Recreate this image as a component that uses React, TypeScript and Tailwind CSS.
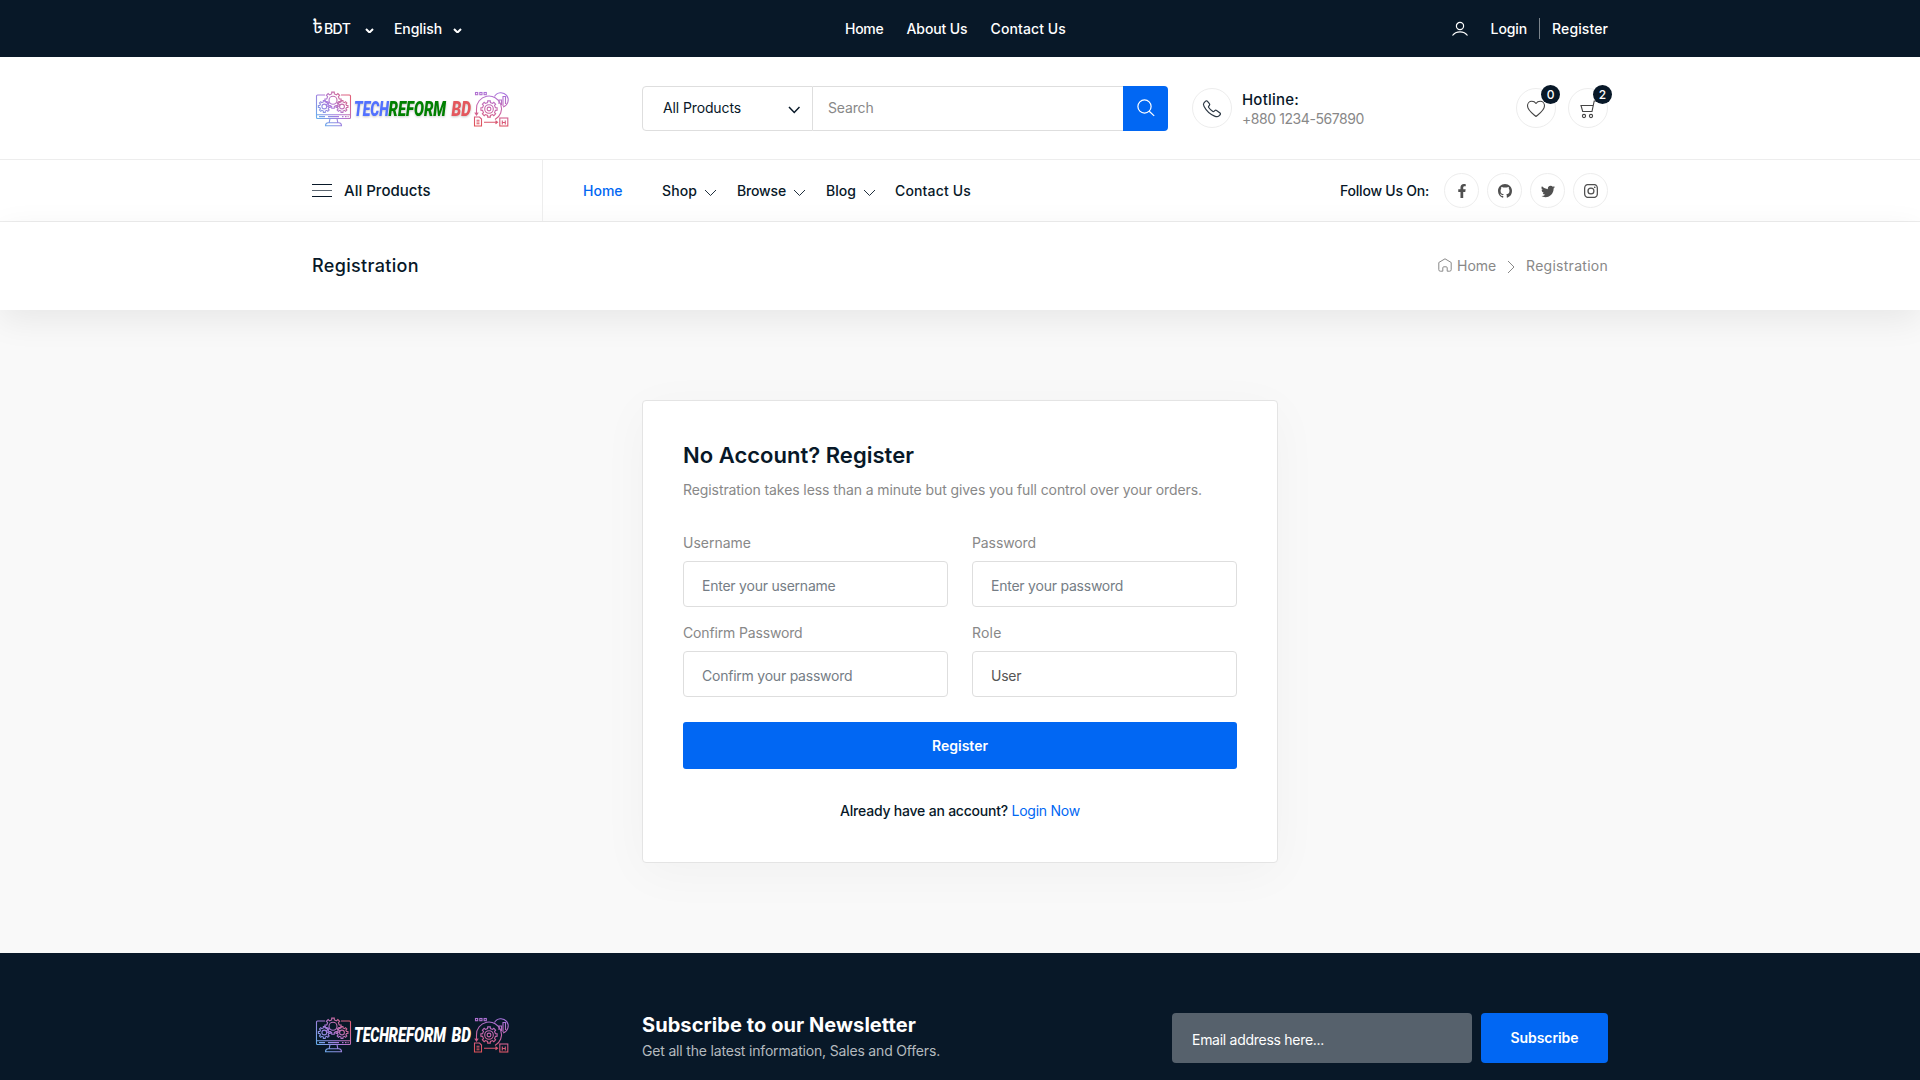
import type { ReactNode } from "react";
import { BsGithub, BsInstagram, BsTwitter } from "react-icons/bs";
import { FaFacebookF } from "react-icons/fa";

const gearPath = (cx: number, cy: number, outer: number, inner: number, teeth: number) => {
  const pts: string[] = [];
  const step = (Math.PI * 2) / teeth;
  for (let i = 0; i < teeth; i++) {
    const a = i * step - Math.PI / 2;
    const at = (r: number, o: number) =>
      `${(cx + r * Math.cos(a + o * step)).toFixed(2)},${(cy + r * Math.sin(a + o * step)).toFixed(2)}`;
    pts.push(at(inner, -0.27), at(outer, -0.2), at(outer, 0.2), at(inner, 0.27));
  }
  return `M${pts.join("L")}Z`;
};

function Logo({ id, light }: { id: string; light?: boolean }) {
  const a = `url(#${id}-a)`;
  const b = `url(#${id}-b)`;
  return (
    <svg width="200" height="46" viewBox="0 0 200 46" fill="none" className="block">
      <defs>
        <linearGradient id={`${id}-a`} gradientUnits="userSpaceOnUse" x1="6" y1="36" x2="37" y2="10">
          <stop offset="0" stopColor="#5fb4ee" />
          <stop offset="0.5" stopColor="#a97add" />
          <stop offset="1" stopColor="#e0607a" />
        </linearGradient>
        <linearGradient id={`${id}-b`} gradientUnits="userSpaceOnUse" x1="182" y1="5" x2="176" y2="39">
          <stop offset="0" stopColor="#a873dd" />
          <stop offset="0.55" stopColor="#cb66a6" />
          <stop offset="1" stopColor="#e0525a" />
        </linearGradient>
      </defs>
      <g stroke={a} strokeWidth="1.1">
        <path d="M13 8H5.5a1 1 0 0 0-1 1v21.5a1 1 0 0 0 1 1h32a1 1 0 0 0 1-1V9a1 1 0 0 0-1-1H29" />
        <path d="M4.5 27.7h34M7 29.6h6M16 29.6h11M30 29.6h1.5M33 29.6h1.5M35.6 29.6h1" />
        <path d="M18 31.5l-.8 4.2M25 31.5l.8 4.2M13.5 38.8c0-2 .8-3.1 2.6-3.1h10.8c1.800 0 2.600 1.100 2.600 3.100z" />
        <path d={gearPath(21, 13.2, 8.2, 6.4, 8)} />
        <circle cx="21" cy="13.2" r="4" />
        <path d={gearPath(12.3, 19.5, 6, 4.6, 8)} />
        <circle cx="12.3" cy="19.500" r="2.400" />
        <path d={gearPath(30, 19.5, 6, 4.6, 8)} />
        <circle cx="30" cy="19.5" r="2.4" />
      </g>
      <g
        fontFamily="Roboto, sans-serif"
        fontStyle="italic"
        fontWeight="900"
        fontSize="21"
        style={{ filter: light ? undefined : "drop-shadow(0 1px 1px rgba(0,0,0,.22))" }}
      >
        <text x="42" y="28.5" textLength="35" lengthAdjust="spacingAndGlyphs" fill={light ? "#fff" : "#5271ff"}>TECH</text>
        <text x="76.500" y="28.5" textLength="57.500" lengthAdjust="spacingAndGlyphs" fill={light ? "#fff" : "#008000"}>REFORM</text>
        <text x="139.500" y="28.5" textLength="19.500" lengthAdjust="spacingAndGlyphs" fill={light ? "#fff" : "#e4575d"}>BD</text>
      </g>
      <g stroke={b} strokeWidth="1.1">
        <rect x="163.500" y="5.500" width="2.200" height="2.200" />
        <rect x="167.800" y="5.500" width="2.200" height="2.200" />
        <rect x="172.100" y="5.500" width="2.200" height="2.200" />
        <path d="M164.500 28V22a12.500 12.500 0 1 1 18.500 10.500M162.800 25.500l1.700 2.500 1.700-2.500" />
        <path d="M182.500 9.500a7.300 7.300 0 1 1 8.500 10.500M187 17v-4h2.500v5M191 19V9.500h2.500V17" />
        <path d={gearPath(177, 22, 8.2, 6.600, 8)} />
        <circle cx="177" cy="22" r="4.300" />
        <circle cx="177" cy="22" r="1.900" />
        <path d="M162.500 30h5l2 2v7h-7zM164.500 33.200h3M164.500 35h3M164.500 36.800h3" />
        <path d="M172 35.200h13M183.500 33.700l2 1.500-2 1.500" />
        <rect x="187.800" y="31" width="8" height="8" />
        <path d="M190.300 33.500v4M193.300 33.500v4M190.300 35.500h3" />
      </g>
    </svg>
  );
}

function Chevron({ w, h, stroke, className = "" }: { w: number; h: number; stroke: number; className?: string }) {
  return (
    <svg width={w + 2} height={h + 2} viewBox={`0 0 ${w + 2} ${h + 2}`} fill="none" stroke="currentColor" strokeWidth={stroke} className={`shrink-0 ${className}`}>
      <path d={`M1 1l${w / 2} ${h}l${w / 2} ${-h}`} />
    </svg>
  );
}

function RoundIcon({ children, badge }: { children: ReactNode; badge?: string }) {
  return (
    <div className="relative flex size-10 items-center justify-center rounded-full border border-[#ededed] text-[#444]">
      {children}
      {badge && (
        <span className="absolute -top-1 -right-[5px] flex size-[19px] items-center justify-center rounded-full bg-[#081828] text-xs font-medium text-white">
          {badge}
        </span>
      )}
    </div>
  );
}

function Field({ label, placeholder, value, className = "" }: { label: string; placeholder?: string; value?: string; className?: string }) {
  return (
    <label className="block">
      <span className={`block h-5 leading-5 text-[#888] ${className}`}>{label}</span>
      <input
        readOnly
        placeholder={placeholder}
        defaultValue={value}
        className="mt-2 block h-[46px] w-full rounded border border-[#dedede] bg-white px-[18px] pt-0.5 tracking-[-0.23px] text-[#555] outline-none placeholder:text-[#757d85]"
      />
    </label>
  );
}

export default function App() {
  return (
    <div className="h-[1080px] w-full overflow-hidden bg-[#f9f9f9] font-['Inter',sans-serif] text-sm whitespace-nowrap text-[#081828]">
      <div className="h-[57px] bg-[#081828] font-medium text-white">
        <div className="mx-auto flex h-full w-[1296px] items-center">
          <div className="flex w-[533px] items-center">
            <span className="w-3 font-['Noto_Sans_Bengali','Noto_Sans',sans-serif] text-[19px] leading-5 font-normal">৳</span>
            <span className="w-[41px] tracking-[-0.6px]">BDT</span>
            <Chevron w={7} h={3.5} stroke={2} className="mt-1 mr-5" />
            <span className="w-[59px] tracking-[-0.08px]">English</span>
            <Chevron w={7} h={3.5} stroke={2} className="mt-1" />
          </div>
          <nav className="flex gap-[23px]">
            <a className="tracking-[-0.26px]">Home</a>
            <a className="tracking-[-0.1px]">About Us</a>
            <a className="tracking-[0.1px]">Contact Us</a>
          </nav>
          <div className="ml-auto flex items-center">
            <svg width="18" height="16" viewBox="0 0 18 16" fill="none" stroke="currentColor" strokeWidth="1.200" className="mr-[22px]">
              <circle cx="9" cy="5" r="3.600" />
              <path d="M1.500 14.500C3.500 11.700 6 10.800 9 10.800s5.500.9 7.500 3.700" />
            </svg>
            <a className="border-r border-[#7b848c] py-0.5 pr-3 text-sm leading-[17px] tracking-[-0.1px]">Login</a>
            <a className="pl-3 tracking-[0.1px]">Register</a>
          </div>
        </div>
      </div>

      <header className="bg-white">
        <div className="mx-auto flex h-[102px] w-[1296px] items-center">
          <div className="w-[330px] pt-1"><Logo id="head" /></div>
          <div className="flex h-[45px] w-[526px]">
            <div className="flex w-[171px] items-center justify-between rounded-l border border-[#dedede] pr-3 pl-5">
              <span className="tracking-[-0.12px]">All Products</span>
              <Chevron w={10.500} h={5.500} stroke={1.500} className="mt-1" />
            </div>
            <div className="flex flex-1 items-center border-y border-[#dedede] pl-[15px] tracking-[-0.16px] text-[#888]">Search</div>
            <button className="flex w-[45px] items-center justify-center rounded-r bg-[#0167f3] text-white">
              <svg width="18" height="18" viewBox="0 0 18 18" fill="none" stroke="currentColor" strokeWidth="1.200">
                <circle cx="7.500" cy="7.500" r="6.600" />
                <path d="M12.200 12.200l5 4.700" />
              </svg>
            </button>
          </div>
          <div className="ml-6 flex items-center gap-2.5">
            <RoundIcon>
              <svg width="20" height="20" viewBox="0 0 20 20" fill="none" stroke="#2c3844" strokeWidth="1.200" strokeLinejoin="round">
                <path d="M2 4.800L3.600 3.200C4.200 2.600 5 2.700 5.500 3.300L7.400 5.700C7.900 6.300 7.800 7 7.300 7.500L6.600 8.300C6.300 8.700 6.400 9.100 6.700 9.500C7.800 11.100 9.300 12.500 10.900 13.500C11.300 13.700 11.700 13.700 12 13.400L12.800 12.600C13.300 12.100 14 12 14.600 12.500L18 15C18.600 15.500 18.600 16.200 18.100 16.800L16.700 18.100C15.700 19 14 18.700 12.600 18.100C7.900 16.200 4.300 12.700 2.100 8.500C1.400 7.100 1.100 5.700 2 4.800Z" />
              </svg>
            </RoundIcon>
            <div className="pt-px">
              <div className="text-[15px] leading-5 font-medium tracking-[0.2px]">Hotline:</div>
              <div className="leading-[18px] tracking-[-0.43px] text-[#888]">+880 1234-567890</div>
            </div>
          </div>
          <div className="ml-auto flex gap-3">
            <RoundIcon badge="0">
              <svg width="20" height="18" viewBox="0 0 20 18" fill="none" stroke="currentColor" strokeWidth="1.100" strokeLinejoin="round" className="mt-0.5">
                <path d="M10 16.500C6 13.300 1.500 10.300 1.500 5.800C1.500 3.200 3.400 1.300 5.800 1.300C7.600 1.300 9 2 10 3.500C11 2 12.400 1.300 14.200 1.300C16.600 1.300 18.500 3.200 18.500 5.800C18.500 10.300 14 13.300 10 16.500Z" />
              </svg>
            </RoundIcon>
            <RoundIcon badge="2">
              <svg width="18" height="19" viewBox="0 0 18 19" fill="none" stroke="currentColor" strokeWidth="1.100" className="mt-0.5">
                <path d="M17.500 1H15.200L13 11.500H3.700L2 5.500H14.200" />
                <circle cx="5" cy="16" r="1.600" />
                <circle cx="12" cy="16" r="1.600" />
              </svg>
            </RoundIcon>
          </div>
        </div>

        <div className="h-[63px] border-y border-[#ededed]">
          <div className="mx-auto flex h-full w-[1296px] items-center font-medium">
            <div className="flex h-full w-[231px] items-center gap-3 border-r border-[#ededed] text-[15px]">
              <span className="flex flex-col gap-[5px]">
                <i className="h-px w-5 bg-[#081828]" />
                <i className="h-px w-5 bg-[#5b6670]" />
                <i className="h-px w-5 bg-[#081828]" />
              </span>
              <span className="tracking-[0.01px]">All Products</span>
            </div>
            <nav className="flex items-center pt-px pl-10">
              <a className="w-[79px] text-[#0167f3]">Home</a>
              <a className="flex w-[75px] items-center gap-[7px] tracking-[0.1px]">Shop<Chevron w={11} h={5.500} stroke={0.900} className="mt-1" /></a>
              <a className="flex w-[89px] items-center gap-[7px] tracking-[-0.16px]">Browse<Chevron w={11} h={5.500} stroke={0.900} className="mt-1" /></a>
              <a className="flex w-[69px] items-center gap-[7px] tracking-[0.03px]">Blog<Chevron w={11} h={5.500} stroke={0.900} className="mt-1" /></a>
              <a className="tracking-[0.15px]">Contact Us</a>
            </nav>
            <div className="ml-auto flex items-center">
              <span className="mr-[15px] tracking-[-0.22px]">Follow Us On:</span>
              <div className="flex gap-2 text-[#505050]">
                <span className="flex size-[35px] items-center justify-center rounded-full border border-[#ededed]"><FaFacebookF size={14} /></span>
                <span className="flex size-[35px] items-center justify-center rounded-full border border-[#ededed]"><BsGithub size={14} /></span>
                <span className="flex size-[35px] items-center justify-center rounded-full border border-[#ededed]"><BsTwitter size={14} /></span>
                <span className="flex size-[35px] items-center justify-center rounded-full border border-[#ededed]"><BsInstagram size={14} /></span>
              </div>
            </div>
          </div>
        </div>
      </header>

      <div className="h-[88px] bg-white shadow-[0_10px_34px_rgba(0,0,0,0.075)]">
        <div className="mx-auto flex h-full w-[1296px] items-center justify-between">
          <h1 className="text-lg font-medium tracking-[0.33px]">Registration</h1>
          <div className="flex items-center text-[#888]">
            <svg width="14" height="14" viewBox="0 0 14 14" fill="none" stroke="currentColor" strokeWidth="1" className="mr-[5px] mb-0.5">
              <path d="M.8 4.500L7 .8l6.200 3.700v7.200a1.500 1.500 0 0 1-1.500 1.500H9.200V9.800a1 1 0 0 0-1-1H5.800a1 1 0 0 0-1 1v3.400H2.300a1.500 1.500 0 0 1-1.500-1.500z" />
            </svg>
            <span className="tracking-[-0.06px]">Home</span>
            <svg width="8" height="14" viewBox="0 0 8 14" fill="none" stroke="currentColor" strokeWidth="1" className="mx-[11px] mt-0.5">
              <path d="M1 1l6 6-6 6" />
            </svg>
            <span className="tracking-[0.27px]">Registration</span>
          </div>
        </div>
      </div>

      <main className="flex h-[643px] items-start justify-center pt-[90px]">
        <section className="h-[463px] w-[636px] rounded border border-[#e4e4e4] bg-white px-10 pt-[39px] shadow-[0_10px_50px_rgba(0,0,0,0.035)]">
          <h2 className="text-[22px] leading-[30px] font-semibold tracking-[0.02px]">No Account? Register</h2>
          <p className="mt-2.5 leading-5 tracking-[-0.085px] text-[#888]">
            Registration takes less than a minute but gives you full control over your orders.
          </p>
          <div className="mt-[33px] grid grid-cols-2 gap-x-6 gap-y-4">
            <Field label="Username" placeholder="Enter your username" />
            <Field label="Password" placeholder="Enter your password" className="tracking-[-0.1px]" />
            <Field label="Confirm Password" placeholder="Confirm your password" className="tracking-[-0.15px]" />
            <Field label="Role" value="User" className="tracking-[0.18px]" />
          </div>
          <button className="mt-[25px] block h-[47px] w-full rounded-[3px] bg-[#0167f3] pt-px font-semibold text-white">Register</button>
          <p className="mt-8 text-center leading-5">
            <span className="font-medium tracking-[-0.21px]">Already have an account? </span>
            <a className="tracking-[-0.25px] text-[#0167f3]">Login Now</a>
          </p>
        </section>
      </main>

      <footer className="h-[127px] bg-[#081828]">
        <div className="mx-auto flex w-[1296px] pt-[60px]">
          <div className="w-[330px]"><Logo id="foot" light /></div>
          <div>
            <h3 className="text-xl leading-6 font-bold tracking-[0.07px] text-white">Subscribe to our Newsletter</h3>
            <p className="mt-0.5 leading-6 tracking-[-0.18px] text-[#b4babf]">Get all the latest information, Sales and Offers.</p>
          </div>
          <div className="ml-auto flex gap-[9px]">
            <input
              readOnly
              placeholder="Email address here..."
              className="h-[50px] w-[300px] rounded bg-[#56616c] pt-0.5 pl-5 tracking-[-0.28px] outline-none placeholder:text-white"
            />
            <button className="h-[50px] w-[127px] rounded bg-[#0167f3] font-semibold tracking-[-0.07px] text-white">Subscribe</button>
          </div>
        </div>
      </footer>
    </div>
  );
}
